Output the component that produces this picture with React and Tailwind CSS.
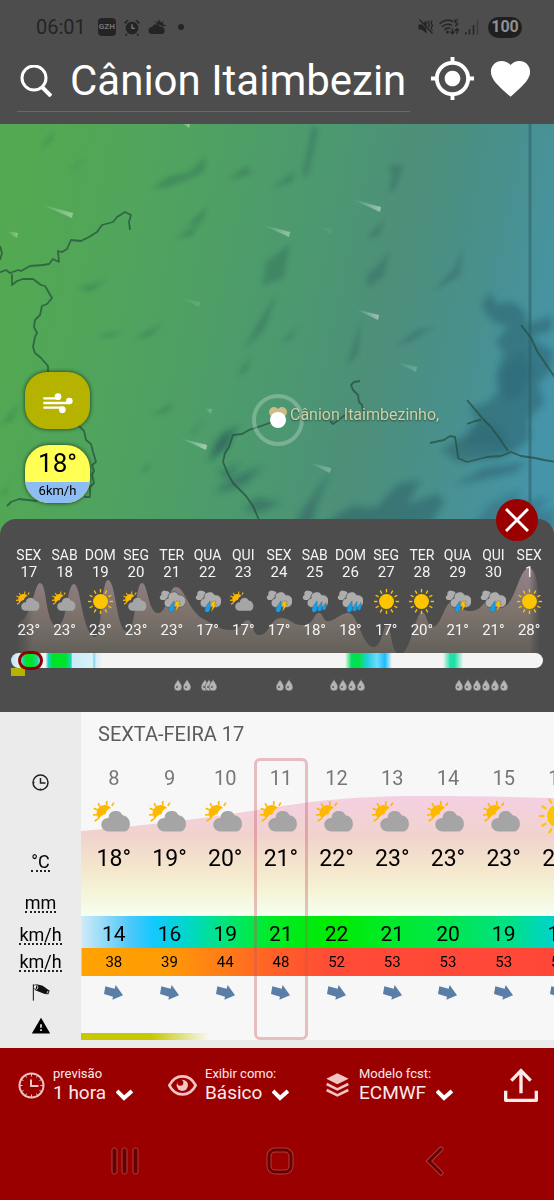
import React, { useState } from 'react';
import { MdFavorite, MdGpsFixed, MdWarning } from 'react-icons/md';

const DAYS = [
    { name: 'SEX', date: 17, icon: 'cloudy', temp: 23 },
    { name: 'SAB', date: 18, icon: 'cloudy', temp: 23 },
    { name: 'DOM', date: 19, icon: 'sun', temp: 23 },
    { name: 'SEG', date: 20, icon: 'cloudy', temp: 23 },
    { name: 'TER', date: 21, icon: 'storm', temp: 23 },
    { name: 'QUA', date: 22, icon: 'storm', temp: 17 },
    { name: 'QUI', date: 23, icon: 'cloudy', temp: 17 },
    { name: 'SEX', date: 24, icon: 'storm', temp: 17 },
    { name: 'SAB', date: 25, icon: 'rain', temp: 18 },
    { name: 'DOM', date: 26, icon: 'rain', temp: 18 },
    { name: 'SEG', date: 27, icon: 'sun', temp: 17 },
    { name: 'TER', date: 28, icon: 'sun', temp: 20 },
    { name: 'QUA', date: 29, icon: 'storm', temp: 21 },
    { name: 'QUI', date: 30, icon: 'storm', temp: 21 },
    { name: 'SEX', date: 1, icon: 'sun', temp: 28 },
];

const HOURS = [
    { hour: 8, icon: 'cloudy', temp: 18, wind: 14, gust: 38 },
    { hour: 9, icon: 'cloudy', temp: 19, wind: 16, gust: 39 },
    { hour: 10, icon: 'cloudy', temp: 20, wind: 19, gust: 44 },
    { hour: 11, icon: 'cloudy', temp: 21, wind: 21, gust: 48 },
    { hour: 12, icon: 'cloudy', temp: 22, wind: 22, gust: 52 },
    { hour: 13, icon: 'cloudy', temp: 23, wind: 21, gust: 53 },
    { hour: 14, icon: 'cloudy', temp: 23, wind: 20, gust: 53 },
    { hour: 15, icon: 'cloudy', temp: 23, wind: 19, gust: 53 },
    { hour: 16, icon: 'sun', temp: 23, wind: 17, gust: 52 },
];

const DROPS = [167, 176, 194, 198, 202, 269, 278, 323, 332, 341, 350, 448, 457, 466, 475, 484, 493];

// x, y of the head, length and opacity of each wind trail
const STREAKS = [
    [73, 215, 34, 0.4],
    [18, 235, 12, 0.35],
    [290, 234, 29, 0.4],
    [381, 209, 29, 0.45],
    [379, 317, 24, 0.45],
    [207, 447, 28, 0.5],
    [331, 470, 24, 0.3],
    [417, 369, 22, 0.2],
    [200, 304, 22, 0.12],
    [212, 411, 8, 0.25],
    [190, 125, 10, 0.45],
    [332, 231, 18, 0.08],
];

const PartlyCloudy = ({ className }) => (
    <svg className={className} viewBox="0 0 122 92" aria-hidden="true">
        <path d="M16 53A23 23 0 0 1 54 22C45 24 39 31 37 41C28 42 22 47 18 55Z" fill="#fdb900" />
        <path d="M41 1v12M15 8l6 10M62 6l-6 10M2 23l12 5M0 43l12-1M5 61l12-8" stroke="#fdb900" strokeWidth="5" fill="none" />
        <path d="M44 92A20 20 0 0 1 45 52H46A22 22 0 0 1 88 44A26 26 0 0 1 97 92Z" fill="#a5a5a5" />
    </svg>
);

const Sun = ({ className }) => (
    <svg className={className} viewBox="-37 -37 74 74" aria-hidden="true">
        <circle r="22" fill="#fdc500" />
        {[0, 30, 60, 90, 120, 150, 180, 210, 240, 270, 300, 330].map((a) => (
            <path key={a} d="M0 -27V-37" stroke="#fdc500" strokeWidth="4" transform={`rotate(${a})`} />
        ))}
    </svg>
);

const RainCloud = ({ className, bolt }) => (
    <svg className={className} viewBox="0 0 74 66" aria-hidden="true">
        <path d="M7 29A8 8 0 0 1 7 14A9 9 0 0 1 20 3A10 10 0 0 1 31 14L18 29Z" fill="#adadad" />
        <path d="M29 50A13 13 0 0 1 26 24A16 16 0 0 1 56 14A18 18 0 0 1 61 50Z" fill="#adadad" stroke="#4d4d4d" strokeWidth="2" />
        <path d="M43 31C43 46 47 63 35 64C24 63 25 53 43 31Z" fill="#159fe8" stroke="#565350" strokeWidth="1" />
        {bolt ? (
            <path d="M49 32H60L56 41H62L46 63L50 46H43Z" fill="#fdc500" stroke="#565350" strokeWidth="1" />
        ) : (
            <>
                <path d="M57 33C57 46 60 60 50 61C41 60 41 53 57 33Z" fill="#159fe8" stroke="#565350" strokeWidth="1" />
                <path d="M69 36C69 46 71 57 63 58C55 57 56 51 69 36Z" fill="#159fe8" stroke="#565350" strokeWidth="1" />
            </>
        )}
    </svg>
);

const DayIcon = ({ type }) => {
    if (type === 'sun') return <Sun className="size-[25px]" />;
    if (type === 'cloudy') return <PartlyCloudy className="h-5 w-[26px]" />;
    return <RainCloud className="h-[23px] w-[26px]" bolt={type === 'storm'} />;
};

const StatusBar = () => (
    <div className="flex h-[54px] items-center justify-between pr-8 pl-9 text-[#242424]">
        <div className="flex items-center gap-2">
            <span className="text-xl leading-5">06:01</span>
            <span className="ml-1 flex h-[18px] w-[18px] items-center justify-center overflow-hidden rounded-sm bg-[#242424] text-[8px] font-bold text-[#777]">GZH</span>
            <svg className="h-[17px] w-4" viewBox="0 0 48 51" aria-hidden="true">
                <circle cx="24" cy="27" r="19" fill="currentColor" />
                <path d="M9 44l-4 6M39 44l4 6M2 13L12 3M46 13L36 3" stroke="currentColor" strokeWidth="5" />
                <path d="M24 16v12h9" stroke="#777" strokeWidth="4" fill="none" />
            </svg>
            <svg className="h-4 w-[18px]" viewBox="0 0 36 32" aria-hidden="true">
                <path d="M8 30A7 7 0 0 1 8 16A9 9 0 0 1 24 15A8 8 0 0 1 29 30Z" fill="currentColor" />
                <path d="M16 9A8 8 0 0 1 30 17C28 13 25 12 22 12Z" fill="currentColor" />
                <path d="M22 1v4M13 4l3 3M32 4l-3 3M36 13h-4" stroke="currentColor" strokeWidth="2" />
            </svg>
            <span className="ml-1 size-[6px] rounded-full bg-[#242424]" />
        </div>
        <div className="flex items-center gap-[5px]">
            <svg className="h-4 w-4" viewBox="0 0 32 32" aria-hidden="true">
                <path d="M1 11h6L17 3v26L7 21H1Z" fill="currentColor" />
                <path d="M2 2l26 28" stroke="#4d4d4d" strokeWidth="3" />
                <path d="M3 1l26 28M22 3l-2 5 3 4-3 4M28 3l-2 5 3 5-3 5 3 5" stroke="currentColor" strokeWidth="2.5" fill="none" />
            </svg>
            <svg className="h-4 w-[21px]" viewBox="0 0 42 32" aria-hidden="true">
                <path d="M1 10C9 1 21 1 28 5M6 16C11 10 20 9 26 13M11 22C15 17 19 17 23 19" stroke="currentColor" strokeWidth="3" fill="none" />
                <circle cx="17" cy="26" r="3" fill="currentColor" />
                <path d="M38 2h-6v5c7-1 7 6 0 6M27 19v10m-4-4l4 5 4-5M36 30V19m-4 5l4-5 4 5" stroke="currentColor" strokeWidth="2.5" fill="none" />
            </svg>
            <svg className="h-4 w-[14px]" viewBox="0 0 28 32" aria-hidden="true">
                <path d="M2 31v-5M9 31V20M17 31V12" stroke="currentColor" strokeWidth="3" />
                <path d="M25 31V3" stroke="#393939" strokeWidth="3" />
            </svg>
            <span className="ml-1 flex h-[21px] w-[34px] items-center justify-center rounded-full bg-[#1f1f1f] text-base font-bold text-[#909090]">100</span>
        </div>
    </div>
);

const SearchBar = () => {
    const [query, setQuery] = useState('Cânion Itaimbezin');
    return (
        <div className="flex h-[70px] items-start pr-5 pl-[17px]">
            <label className="flex h-[58px] min-w-0 flex-1 items-center border-b border-[#696969] pb-1 pl-[3px]">
                <svg className="size-8 shrink-0" viewBox="0 0 32 32" fill="none" stroke="white" strokeWidth="3" aria-hidden="true">
                    <circle cx="14" cy="13" r="12" />
                    <path d="M22 22l9 9" strokeWidth="4" />
                </svg>
                <input
                    aria-label="Buscar local"
                    value={query}
                    onChange={(e) => setQuery(e.target.value)}
                    className="ml-[18px] h-12 min-w-0 flex-1 bg-transparent text-[42px] leading-[48px] text-white outline-none"
                />
            </label>
            <div className="ml-[19px] flex gap-[11px] pt-px text-white">
                <button aria-label="Minha localização"><MdGpsFixed className="size-[47px]" /></button>
                <button aria-label="Favorito"><MdFavorite className="size-[47px]" /></button>
            </div>
        </div>
    );
};

const Terrain = () => (
    <svg className="absolute inset-0 h-full w-full" viewBox="0 124 554 416" preserveAspectRatio="xMidYMid slice" aria-hidden="true">
        <defs>
            <linearGradient id="wind" gradientUnits="userSpaceOnUse" x1="0" y1="280" x2="554" y2="400">
                <stop offset="0" stopColor="#53a951" />
                <stop offset="0.22" stopColor="#50a45d" />
                <stop offset="0.5" stopColor="#4c996f" />
                <stop offset="0.68" stopColor="#4d8f7a" />
                <stop offset="0.83" stopColor="#49908d" />
                <stop offset="1" stopColor="#4594a9" />
            </linearGradient>
            <linearGradient id="streak" x1="0" y1="0" x2="1" y2="0">
                <stop offset="0" stopColor="white" stopOpacity="0" />
                <stop offset="1" stopColor="white" />
            </linearGradient>
            <filter id="soft" x="-20%" y="-20%" width="140%" height="140%">
                <feGaussianBlur stdDeviation="2.5" />
            </filter>
            <filter id="softer" x="-20%" y="-20%" width="140%" height="140%">
                <feGaussianBlur stdDeviation="3" />
            </filter>
        </defs>
        <rect y="100" width="554" height="460" fill="url(#wind)" />
        <g fill="#1f4a50" opacity="0.24" filter="url(#soft)">
            <path d="M152 188L170 176L190 172L206 156L204 172L186 180L166 188Z" />
            <path d="M312 126L318 128L308 176L302 176ZM272 188L296 170L292 182ZM228 180L246 166L252 174Z" />
            <path d="M290 244L284 278L262 286L266 262ZM278 292L264 330L244 350L256 326Z" />
            <path d="M388 166L404 164L396 188L388 194L392 176ZM366 238L386 218L378 236ZM366 276L390 252L384 276L368 288ZM346 366L362 318L358 354Z" />
            <path d="M132 340L164 322L150 336ZM96 336L126 330L108 338ZM76 288L108 280L90 292ZM74 270L106 262Z" />
            <path d="M396 346L416 330L436 326L410 342ZM432 292L454 268L464 246L460 276ZM186 226L208 206L202 222ZM176 238L200 222L192 236Z" />
            <path d="M210 460L222 434L240 424L228 448ZM190 434L204 418L196 432ZM150 416L174 402L168 412ZM138 474L152 460L148 470Z" />
            <path d="M40 150L54 130L52 140ZM70 170L86 156L76 168ZM0 426L20 402L12 420ZM0 496L8 484L6 494ZM236 376L252 356L246 372ZM280 344L298 326L292 338Z" />
        </g>
        <g fill="#1c4658" filter="url(#softer)">
            <path d="M482 304L490 292L496 304L512 302L524 310L528 324L552 316V330L530 338L554 352L550 372L538 384L544 402L528 420L530 438L514 452L500 458L458 462L442 450L466 434L478 418L468 408L486 404L498 392L496 376L504 352L496 342L508 326L498 324L488 316Z" opacity="0.36" />
            <path d="M500 372L520 350L534 372L520 396L504 402ZM462 446L480 420L502 428L508 450Z" opacity="0.14" />
            <path d="M456 484L484 468L526 462L516 472L480 480ZM244 510L256 498L280 502L262 512ZM300 514L332 470L318 500L310 530L296 530Z" opacity="0.34" />
            <path d="M208 462L216 440L232 428L226 448ZM216 490L236 476L262 466L246 484L222 492ZM218 472L240 464L226 480Z" opacity="0.35" />
            <path d="M330 520L352 506L376 508L398 484L420 480L408 504L438 494L444 502L430 524L330 530Z" opacity="0.36" />
            <path d="M476 522L490 504L520 490L514 502L548 498L538 512L554 510V530H470Z" opacity="0.26" />
        </g>
        <path d="M530 124V540" stroke="#2d5e66" strokeOpacity="0.55" strokeWidth="3" />
        <g fill="none" stroke="#234b3c" strokeOpacity="0.7" strokeWidth="1.8" strokeLinejoin="round">
            <path d="M130 230l-1-8 2-7-6-3-8 5-4 5-11 3-5 7-8 5-8 4-10-1-4 9-5 3-4-1 1 11-6-3-4 5-6 1-13 1-9 5-3-1-8 3-4-3-8 3M0 246l2 7-2 7M12 274v11l5-4 6-2 10 0 8 6 4 1 7 12-5 6-5 2-2 9-5 5-1 7 3 6-2 4-2 10 2 6 6 5 7 8v6M78 425l6 6 2 9 5 4 2 8 3 10-4 3 2 6-2 4 2 8-4 4v10l-6 0M7 506l4-4 8-3 17 2 10-4" />
            <path d="M360 381l-6 1-3 3 2 5 5 5 1 7 3 3 1 6M345 415l-4 3-8 6-3-3M278 420l-17 6-12 4-7 4-9 1-4 12-4 6-2 9 5 12 5 9 13 13 7 10 6 14 1 20" />
            <path d="M430 443l14-3 6-4 5 1 2 12 1 9 9 4 20-5 14-1 10-4 10 4 14 2 9 2 12 2M467 400l16 19 8 8 9 12 8 12M467 424l8-3 6-1M521 325l10 13 6 13 8 12 11 16" />
        </g>
        {STREAKS.map(([x, y, len, opacity]) => (
            <path
                key={`${x}-${y}`}
                d={`M${x - len} ${y - len / 3}L${x} ${y - 2}L${x - 1} ${y + 3}Z`}
                fill="url(#streak)"
                opacity={opacity}
            />
        ))}
        <circle cx="278" cy="420" r="24" fill="none" stroke="white" strokeOpacity="0.25" strokeWidth="4" />
        <path d="M278 424l-8-9a5 5 0 0 1 8-6 5 5 0 0 1 8 6Z" fill="#cdbd84" />
        <circle cx="278" cy="420" r="8" fill="white" />
    </svg>
);

const MapView = () => (
    <div className="relative h-[416px] overflow-hidden">
        <Terrain />
        <p className="absolute top-[281px] left-[290px] text-base leading-5 text-[#cfd2a6] [text-shadow:0_1px_2px_#2a4a40]">Cânion Itaimbezinho,</p>
        <div className="absolute top-[248px] left-[25px] flex flex-col gap-4">
            <button aria-label="Vento" className="flex h-[57px] w-[65px] items-center justify-center rounded-[22px] bg-[#b5b200] shadow-[0_0_4px_#17351c]">
                <svg className="mt-1 h-5 w-[30px]" viewBox="0 0 90 60" fill="white" aria-hidden="true">
                    <path d="M1 16h50M1 30h80M1 44h58" stroke="white" strokeWidth="7" />
                    <circle cx="45" cy="11" r="10" />
                    <circle cx="79" cy="24" r="10" />
                    <circle cx="58" cy="50" r="10" />
                </svg>
            </button>
            <button className="flex h-[58px] w-[65px] flex-col overflow-hidden rounded-[24px] bg-[#ffff54] text-black shadow-[0_0_4px_#17351c]">
                <span className="flex h-[37px] w-full items-center justify-center text-[26px]">18°</span>
                <span className="flex h-[21px] w-full items-center justify-center bg-[#8dbdf2] pb-1 text-[13px]">6km/h</span>
            </button>
        </div>
    </div>
);

const DayStrip = () => (
    <section className="relative -mt-[21px] h-[193px] rounded-t-2xl bg-[#4d4d4d] pt-7 text-[#f4f4f4]">
        <svg className="absolute inset-x-0 top-[45px] h-[90px] w-full" viewBox="0 564 554 90" preserveAspectRatio="none" aria-hidden="true">
            <defs>
                <linearGradient id="daytemp" x1="0" y1="0" x2="0" y2="1">
                    <stop offset="0" stopColor="#95838c" />
                    <stop offset="0.45" stopColor="#82756f" />
                    <stop offset="1" stopColor="#63615a" />
                </linearGradient>
                <linearGradient id="dayfade" x1="0" y1="0" x2="1" y2="0">
                    <stop offset="0.03" stopColor="black" />
                    <stop offset="0.06" stopColor="white" />
                    <stop offset="0.955" stopColor="white" />
                    <stop offset="0.975" stopColor="black" />
                </linearGradient>
                <mask id="daymask" maskUnits="userSpaceOnUse" x="0" y="560" width="554" height="100">
                    <rect y="560" width="554" height="100" fill="url(#dayfade)" />
                </mask>
            </defs>
            <path
                mask="url(#daymask)"
                fill="url(#daytemp)"
                d="M18 653V622C32 620 34 583 40 583C47 583 45 618 55 626C68 630 66 584 74 584C81 584 82 634 95 637C102 637 101 580 108 580C116 580 116 630 127 632C136 632 135 583 142 583C148 583 148 613 158 613C168 613 168 587 176 587C184 587 187 606 200 617C210 622 220 631 232 630C242 629 242 620 248 620C253 620 252 635 259 635C270 635 270 618 281 618C291 618 292 626 304 625C314 624 314 613 319 613C323 613 323 623 330 621C338 618 343 612 349 613C358 614 362 647 374 647C383 645 383 625 387 625C391 625 391 650 397 653H403C412 645 416 612 422 612C427 612 427 627 432 627C442 627 444 602 452 602C460 602 458 611 470 611C482 611 482 602 487 602C492 602 492 608 500 608C516 608 518 568 529 568C540 568 539 610 544 653Z"
            />
        </svg>
        <div className="relative grid grid-cols-15 pr-[7px] pl-[11px]">
            {DAYS.map((d, i) => (
                <button key={i} className="flex flex-col items-center">
                    <span className="text-sm leading-[17px]">{d.name}</span>
                    <span className="text-[15px] leading-[17px]">{d.date}</span>
                    <span className="mt-2 flex h-6 items-center"><DayIcon type={d.icon} /></span>
                    <span className="mt-[7px] text-[15px] leading-5">{d.temp}°</span>
                </button>
            ))}
        </div>
        <div className="relative mt-[13px] mr-[11px] ml-[11px] h-[15px] rounded-full bg-[#f4f4f4] bg-[linear-gradient(to_right,#bfe4f4_0%,#dff1f8_1.5%,#20d8b0_2.2%,#00e32b_2.8%,#00e32b_4%,#20d8b0_5%,#f4f4f4_5.8%,#f4f4f4_6.5%,#20d0d0_7%,#00e32b_7.8%,#00e32b_10.3%,#1ed2c8_11.3%,#c8ebf5_11.5%,#d8f2f8_15.3%,#80d4ec_15.6%,#d4eff8_16%,#f4f4f4_17.2%,#f4f4f4_62.8%,#00e060_64%,#00e340_65.3%,#20cfe0_67%,#6cdcff_68.8%,#1cbcff_70.3%,#f4f4f4_71.6%,#f4f4f4_81.2%,#20e0a8_82.6%,#20e0a8_83.4%,#f4f4f4_85%)]">
            <span className="absolute -top-0.5 left-[7px] h-[19px] w-[25px] rounded-full border-[3px] border-[#8f0000]" />
        </div>
        <div className="ml-[11px] h-2 w-[14px] bg-[#b5b200]" />
        <svg className="mt-[3px] h-3 w-full px-[11px]" viewBox="0 0 532 12" preserveAspectRatio="none" aria-hidden="true">
            {DROPS.map((x) => (
                <g key={x} transform={`translate(${x} 6)`}>
                    <path d="M0 -6C1 -3 4 -1 4 2A4 4 0 0 1 -4 2C-4 -1 -1 -3 0 -6Z" fill="#b4b4b4" stroke="#4d4d4d" strokeWidth="0.6" />
                    <circle cx="-1" cy="2" r="1" fill="#5c5c5c" />
                </g>
            ))}
        </svg>
        <button aria-label="Fechar" className="absolute -top-5 right-4 flex size-[42px] items-center justify-center rounded-full bg-[#9b0000]">
            <svg className="size-6" viewBox="0 0 24 24" stroke="white" strokeWidth="3" aria-hidden="true">
                <path d="M1 1l22 22M23 1L1 23" />
            </svg>
        </button>
    </section>
);

const ClockIcon = () => (
    <svg className="mx-auto size-[17px]" viewBox="0 0 34 34" fill="none" stroke="#222" strokeWidth="3" aria-hidden="true">
        <circle cx="17" cy="17" r="15" />
        <path d="M17 8v10h10M17 29v2M5 17H3" />
    </svg>
);

const Windsock = () => (
    <svg className="mx-auto h-[17px] w-[18px]" viewBox="0 0 54 51" aria-hidden="true">
        <path d="M4 1v49" stroke="#111" strokeWidth="3" />
        <path d="M3 5l11-4M3 12l9 6" stroke="#111" strokeWidth="2" />
        <path d="M14 1L32 5L53 20L49 31L38 30L10 19Z" fill="#111" />
        <path d="M15 4C19 8 18 14 13 17M46 21C49 23 47 27 44 28" stroke="#eee" strokeWidth="3" fill="none" />
    </svg>
);

const labelText = 'border-b-2 border-dotted border-[#222] text-lg leading-[17px] font-normal inline-block';

const HourTable = () => (
    <section className="relative overflow-hidden bg-[linear-gradient(to_right,#ebebeb_81px,#f7f7f7_81px)] text-black">
        <div className="absolute top-[84px] right-0 left-[81px] h-[120px]">
            <svg className="h-full w-full" viewBox="0 0 473 120" preserveAspectRatio="none" aria-hidden="true">
                <defs>
                    <linearGradient id="hourtemp" x1="0" y1="0" x2="0" y2="1">
                        <stop offset="0" stopColor="#f4cfe3" />
                        <stop offset="0.33" stopColor="#f1d3cd" />
                        <stop offset="0.6" stopColor="#f4e6cc" />
                        <stop offset="0.8" stopColor="#f5f4d8" />
                        <stop offset="1" stopColor="#f6fff1" />
                    </linearGradient>
                </defs>
                <path d="M0 35C60 30 110 24 170 15C220 7 260 0 340 0C400 0 430 1 473 2V120H0Z" fill="url(#hourtemp)" />
            </svg>
        </div>
        <table className="relative w-[106%] table-fixed border-collapse text-center">
            <colgroup>
                <col className="w-[86px]" />
                {HOURS.map((h) => <col key={h.hour} />)}
            </colgroup>
            <thead>
                <tr className="h-11">
                    <td className="p-0" />
                    <th colSpan={9} className="p-0 pl-3 text-left text-xl font-normal text-[#5c5c5c]">SEXTA-FEIRA 17</th>
                </tr>
            </thead>
            <tbody>
                <tr className="h-11">
                    <th aria-label="Hora" className="p-0 pt-2 pr-[5px]"><ClockIcon /></th>
                    {HOURS.map((h) => (
                        <td key={h.hour} className="relative p-0 text-xl text-[#777]">
                            {h.hour}
                            {h.hour === 11 && (
                                <span className="absolute inset-x-0 top-0.5 mx-px h-[282px] rounded-md border-[3px] border-[#c8505a]/35" />
                            )}
                        </td>
                    ))}
                </tr>
                <tr className="h-9">
                    <th aria-label="Tempo" className="p-0" />
                    {HOURS.map((h) => (
                        <td key={h.hour} className="p-0 align-top">
                            {h.icon === 'sun'
                                ? <Sun className="mx-auto -mt-1 size-10" />
                                : <PartlyCloudy className="mx-auto h-8 w-[41px]" />}
                        </td>
                    ))}
                </tr>
                <tr className="h-11">
                    <th className="p-0 pt-2.5 pr-[5px]"><span className={labelText}>°C</span></th>
                    {HOURS.map((h) => <td key={h.hour} className="p-0 pt-0.5 text-[23px]">{h.temp}°</td>)}
                </tr>
                <tr className="h-9">
                    <th className="p-0 pt-3 pr-[5px]"><span className={labelText}>mm</span></th>
                    {HOURS.map((h) => <td key={h.hour} className="p-0" />)}
                </tr>
                <tr className="h-8 bg-[linear-gradient(to_right,#ebebeb_81px,#cdeaf8_82px,#50c8fa_22%,#14c8ff_26%,#00d8c8_32%,#00e673_39%,#00eb28_46%,#00eb00_57%,#00eb28_66%,#00e650_77%,#00e187_87%,#00d2c8_94%,#14c8ff_100%)]">
                    <th className="p-0 pt-2 pr-[5px]"><span className={labelText}>km/h</span></th>
                    {HOURS.map((h) => <td key={h.hour} className="p-0 pt-1 text-[21px] leading-[28px]">{h.wind}</td>)}
                </tr>
                <tr className="h-7 bg-[linear-gradient(to_right,#ebebeb_81px,#ffa200_82px,#ff9b05_28%,#ff7d19_38%,#ff5f28_47%,#ff4b37_57%,#ff4637_100%)]">
                    <th className="p-0 pt-0.5 pr-[5px]"><span className={labelText}>km/h</span></th>
                    {HOURS.map((h) => <td key={h.hour} className="p-0 text-[15px]">{h.gust}</td>)}
                </tr>
                <tr className="h-8">
                    <th aria-label="Direção do vento" className="p-0 pr-[5px]"><Windsock /></th>
                    {HOURS.map((h) => (
                        <td key={h.hour} className="p-0">
                            <svg className="mx-auto h-[15px] w-[19px]" viewBox="0 0 57 45" aria-hidden="true">
                                <path d="M4 4L32 11L35 0L57 31L25 44L27 35L0 27Z" fill="#5a7fa6" />
                            </svg>
                        </td>
                    ))}
                </tr>
                <tr className="h-8">
                    <th aria-label="Alertas" className="p-0 pt-1 pr-[5px]"><MdWarning className="mx-auto size-5" /></th>
                    <td colSpan={9} className="p-0" />
                </tr>
            </tbody>
        </table>
        <div className="absolute bottom-2 left-[81px] h-[7px] w-32 bg-[linear-gradient(to_right,#c8c800_55%,#c8c80000)]" />
        <div className="relative h-2 bg-[#ebebeb]" />
    </section>
);

const Option = ({ id, label, value, icon }) => (
    <div className="flex items-center gap-2">
        {icon}
        <div>
            <label htmlFor={id} className="block text-[13px] leading-4">{label}</label>
            <div className="flex items-center gap-[9px]">
                <select id={id} className="appearance-none bg-transparent text-[19px] leading-[22px] outline-none">
                    <option>{value}</option>
                </select>
                <svg className="mt-1 h-3 w-[17px]" viewBox="0 0 17 12" fill="none" stroke="white" strokeWidth="4" aria-hidden="true">
                    <path d="M1 2l7 7 8-7" />
                </svg>
            </div>
        </div>
    </div>
);

const Footer = () => (
    <footer className="bg-[#9b0000] text-[#fbeaea]">
        <div className="flex h-[74px] items-center gap-[35px] pr-4 pl-[18px]">
            <Option
                id="step"
                label="previsão"
                value="1 hora"
                icon={
                    <svg className="size-[27px]" viewBox="0 0 54 54" fill="none" stroke="#f3c4c4" strokeWidth="4" aria-hidden="true">
                        <circle cx="27" cy="27" r="24" />
                        <path d="M26 15v13h15" />
                        <path d="M27 4v5M27 45v5M4 27h5M45 27h5M15 7l2 4M39 7l-2 4M15 47l2-4M39 47l-2-4M7 15l4 2M47 15l-4 2M7 39l4-2M47 39l-4-2" strokeWidth="2" />
                    </svg>
                }
            />
            <Option
                id="view"
                label="Exibir como:"
                value="Básico"
                icon={
                    <svg className="h-[21px] w-[29px]" viewBox="0 0 87 63" aria-hidden="true">
                        <path d="M4 31C22 -5 65 -5 83 31C65 67 22 67 4 31Z" fill="none" stroke="#f3c4c4" strokeWidth="8" />
                        <circle cx="43" cy="31" r="17" fill="#f3c4c4" />
                        <circle cx="37" cy="23" r="9" fill="#9b0000" />
                    </svg>
                }
            />
            <Option
                id="model"
                label="Modelo fcst:"
                value="ECMWF"
                icon={
                    <svg className="h-6 w-[27px]" viewBox="0 0 69 72" aria-hidden="true">
                        <path d="M34 1L68 17L34 34L1 17Z" fill="#f3c4c4" />
                        <path d="M2 33L34 49L67 33M2 51L34 67L67 51" fill="none" stroke="#f3c4c4" strokeWidth="8" />
                    </svg>
                }
            />
            <button aria-label="Compartilhar" className="ml-auto">
                <svg className="h-[34px] w-[34px]" viewBox="0 0 102 102" fill="none" stroke="#fbeaea" strokeWidth="10" aria-hidden="true">
                    <path d="M5 68V97H97V68" strokeLinejoin="round" />
                    <path d="M51 76V8M22 38L51 8L80 38" />
                </svg>
            </button>
        </div>
        <nav className="grid h-[78px] grid-cols-3 pr-[42px] pl-[47px]">
            <button aria-label="Recentes" className="flex items-center justify-center">
                <svg className="h-7 w-7" viewBox="0 0 28 28" fill="#650000" stroke="#b13c3c" aria-hidden="true">
                    <rect x="1" y="1" width="5" height="26" rx="2" />
                    <rect x="11" y="1" width="5" height="26" rx="2" />
                    <rect x="22" y="1" width="5" height="26" rx="2" />
                </svg>
            </button>
            <button aria-label="Início" className="flex items-center justify-center">
                <svg className="h-7 w-7" viewBox="0 0 28 28" fill="none" aria-hidden="true">
                    <rect x="3" y="3" width="22" height="22" rx="6" stroke="#b13c3c" strokeWidth="5" />
                    <rect x="3" y="3" width="22" height="22" rx="6" stroke="#650000" strokeWidth="3" />
                </svg>
            </button>
            <button aria-label="Voltar" className="flex items-center justify-center">
                <svg className="h-[30px] w-5" viewBox="0 0 20 30" fill="none" strokeLinecap="round" aria-hidden="true">
                    <path d="M16 3L4 15L16 27" stroke="#b13c3c" strokeWidth="5" />
                    <path d="M16 3L4 15L16 27" stroke="#650000" strokeWidth="3" />
                </svg>
            </button>
        </nav>
    </footer>
);

const App = () => (
    <div className="overflow-hidden bg-[#9b0000] font-[Roboto,sans-serif]">
        <header className="bg-[#4d4d4d]">
            <StatusBar />
            <SearchBar />
        </header>
        <main>
            <MapView />
            <DayStrip />
            <HourTable />
        </main>
        <Footer />
    </div>
);

export default App;
